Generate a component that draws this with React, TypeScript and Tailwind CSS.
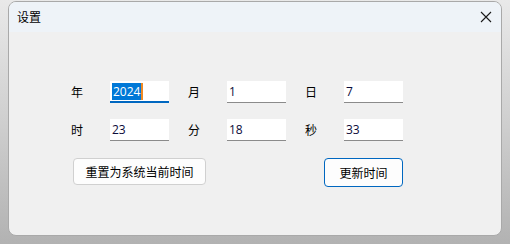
import React from 'react';

const cjk = { fontFamily: '"Noto Sans CJK SC", "Noto Sans", sans-serif' };

const fields = [
  [
    { label: '年', value: '2024', focused: true },
    { label: '月', value: '1' },
    { label: '日', value: '7' },
  ],
  [
    { label: '时', value: '23' },
    { label: '分', value: '18' },
    { label: '秒', value: '33' },
  ],
];

function Field({ label, value, focused }: { label: string; value: string; focused?: boolean }) {
  return (
    <div className="flex items-center w-[117px] shrink-0">
      <span className="w-[39px] shrink-0 text-[12px] text-black" style={cjk}>{label}</span>
      <div
        className={
          'w-[59px] h-[22px] shrink-0 bg-white flex items-center pl-[2px] text-[12px] text-[#0b0b3a] border-b-2 ' +
          (focused ? 'border-[#0067c0]' : 'border-[#8b8b8b] border-b-[1.5px]')
        }
        style={{ fontFamily: '"Open Sans", "Liberation Sans", sans-serif' }}
      >
        {focused ? (
          <span className="bg-[#0078d7] text-white leading-[17px] px-[1px] border-r-2 border-[#f08a24]">{value}</span>
        ) : (
          <span>{value}</span>
        )}
      </div>
    </div>
  );
}

export default function App() {
  return (
    <div className="w-[510px] h-[244px] bg-gradient-to-b from-[#e9e9e9] via-[#cfcfcf] to-[#b2b2b2] pl-[8px] pt-[1px]">
      <div className="w-[494px] h-[235px] rounded-[8px] border border-[#a9a9a9] bg-[#f0f0f0] overflow-hidden flex flex-col">
        <div className="h-[30px] bg-[#eef3f8] flex items-center justify-between pl-[8px] pr-[9px]">
          <span className="text-[12px] text-black" style={cjk}>设置</span>
          <svg width="12" height="12" viewBox="0 0 12 12">
            <path d="M1 1 L11 11 M11 1 L1 11" stroke="#1a1a1a" strokeWidth="1.1" />
          </svg>
        </div>
        <div className="flex flex-col pt-[49px] pl-[62px]">
          <div className="flex flex-col gap-[16px]">
            {fields.map((row, i) => (
              <div key={i} className="flex">
                {row.map(f => (
                  <Field key={f.label} {...f} />
                ))}
              </div>
            ))}
          </div>
          <div className="flex items-start gap-[118px] mt-[17px] pl-[2px]">
            <button
              className="w-[133px] h-[27px] shrink-0 rounded-[4px] border border-[#d0d0d0] bg-[#fdfdfd] text-[12px] text-black"
              style={cjk}
            >
              重置为系统当前时间
            </button>
            <button
              className="w-[79px] h-[29px] shrink-0 rounded-[4px] border border-[#0067c0] bg-[#fdfdfd] text-[12px] text-black"
              style={cjk}
            >
              更新时间
            </button>
          </div>
        </div>
      </div>
    </div>
  );
}
